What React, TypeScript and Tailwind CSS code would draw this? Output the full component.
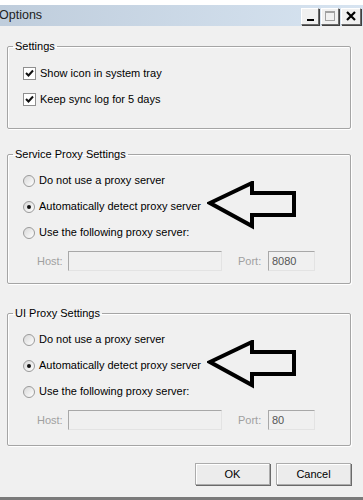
import React from "react";

const font = "font-['Liberation_Sans',Arial,sans-serif]";

function Checkbox({ label }: { label: string }) {
  return (
    <div className="flex items-center h-[13px]">
      <div className="w-[13px] h-[13px] border border-[#8f8f8f] bg-white flex items-center justify-center ml-[15px]">
        <svg width="9" height="9" viewBox="0 0 9 9">
          <path d="M1 4 L3.5 6.5 L8 1.5" stroke="#111" strokeWidth="2" fill="none" />
        </svg>
      </div>
      <span className="ml-[4px] text-[11px] text-black leading-none">{label}</span>
    </div>
  );
}

function Radio({ label, checked }: { label: string; checked?: boolean }) {
  return (
    <div className="flex items-center h-[13px]">
      <div className="ml-[15px] w-[12px] h-[12px] rounded-full border border-[#9a9a9a] bg-gradient-to-br from-[#d8d8d8] to-white flex items-center justify-center">
        {checked && <div className="w-[4px] h-[4px] rounded-full bg-[#111]" />}
      </div>
      <span className="ml-[4px] text-[11px] text-black leading-none">{label}</span>
    </div>
  );
}

function Arrow() {
  return (
    <svg width="92" height="50" viewBox="0 0 92 50" className="absolute">
      <polygon
        points="3,22 45,2 45,12 87,12 87,34 45,34 45,45"
        fill="none"
        stroke="#000"
        strokeWidth="4"
        strokeLinejoin="miter"
      />
    </svg>
  );
}

function ProxyBox({ title, port, pb }: { title: string; port: string; pb: string }) {
  return (
    <fieldset className={`relative border border-[#a5a5a5] shadow-[inset_1px_1px_0_#fff,1px_1px_0_#fff] rounded-[2px] px-0 pt-[13px] ${pb}`}>
      <legend className="ml-[5px] px-[2px] text-[11px] leading-[13px] text-black">{title}</legend>
      <div className="flex flex-col gap-[13px]">
        <Radio label="Do not use a proxy server" />
        <Radio label="Automatically detect proxy server" checked />
        <Radio label="Use the following proxy server:" />
      </div>
      <div className="flex items-center mt-[12px] h-[20px]">
        <span className="ml-[29px] w-[31px] text-[11px] text-[#a0a0a0]">Host:</span>
        <div className="w-[154px] h-[20px] border border-[#a8a8a8] border-r-[#e3e3e3] border-b-[#e3e3e3] bg-[#f0f0f0]" />
        <span className="ml-[16px] w-[30px] text-[11px] text-[#a0a0a0]">Port:</span>
        <div className="w-[47px] h-[20px] border border-[#a8a8a8] border-r-[#e3e3e3] border-b-[#e3e3e3] bg-[#f0f0f0] text-[11px] text-[#555] pl-[3px] leading-[18px]">
          {port}
        </div>
      </div>
      <div className="absolute left-[199px] top-[20px]">
        <Arrow />
      </div>
    </fieldset>
  );
}

function TitleButton({ children }: { children: React.ReactNode }) {
  return (
    <div className="w-[18px] h-[17px] bg-[#f0f0f0] border border-t-white border-l-white border-r-[#6a6a6a] border-b-[#6a6a6a] shadow-[1px_1px_0_#404040] flex items-center justify-center">
      {children}
    </div>
  );
}

export default function App() {
  return (
    <div className={`w-[363px] h-[500px] overflow-hidden bg-[#f0f0f0] flex flex-col ${font}`}>
      <div className="h-[5px] bg-white shrink-0" />
      <div className="h-[21px] shrink-0 flex items-center justify-between bg-gradient-to-r from-[#bfcddc] to-[#d7e4f1]">
        <span className="-ml-[1px] text-[12.5px] text-[#222]">Options</span>
        <div className="flex gap-[2px] mr-[2px] mt-[1px]">
          <TitleButton>
            <div className="w-[7px] h-[2px] bg-black mt-[8px]" />
          </TitleButton>
          <TitleButton>
            <div className="w-[10px] h-[10px] border border-[#a0a0a0] border-t-2" />
          </TitleButton>
          <div className="w-[20px] h-[17px] bg-[#f0f0f0] border border-t-white border-l-white border-r-[#6a6a6a] border-b-[#6a6a6a] shadow-[1px_1px_0_#404040] flex items-center justify-center">
            <svg width="10" height="10" viewBox="0 0 10 10">
              <path d="M1 1 L9 9 M9 1 L1 9" stroke="#000" strokeWidth="2.2" />
            </svg>
          </div>
        </div>
      </div>

      <div className="flex flex-col px-[7px] w-[358px] pt-[14px]">
        <fieldset className="border border-[#a5a5a5] shadow-[inset_1px_1px_0_#fff,1px_1px_0_#fff] rounded-[2px] pt-[14px] pb-[22px]">
          <legend className="ml-[5px] px-[2px] text-[11px] leading-[13px] text-black">Settings</legend>
          <div className="flex flex-col gap-[13px]">
            <Checkbox label="Show icon in system tray" />
            <Checkbox label="Keep sync log for 5 days" />
          </div>
        </fieldset>

        <div className="mt-[19px]">
          <ProxyBox title="Service Proxy Settings" port="8080" pb="pb-[12px]" />
        </div>
        <div className="mt-[23px]">
          <ProxyBox title="UI Proxy Settings" port="80" pb="pb-[15px]" />
        </div>

        <div className="flex justify-end gap-[6px] mt-[17px]">
          <button className="w-[75px] h-[22px] bg-[#ececec] border border-[#acacac] shadow-[inset_1px_1px_0_#fff,1px_1px_0_#6a6a6a] text-[11px] text-black">
            OK
          </button>
          <button className="w-[75px] h-[22px] bg-[#ececec] border border-[#acacac] shadow-[inset_1px_1px_0_#fff,1px_1px_0_#6a6a6a] text-[11px] text-black">
            Cancel
          </button>
        </div>
      </div>
      <div className="flex-1" />
      <div className="h-[3px] bg-[#7a7a7a] shrink-0" />
    </div>
  );
}
